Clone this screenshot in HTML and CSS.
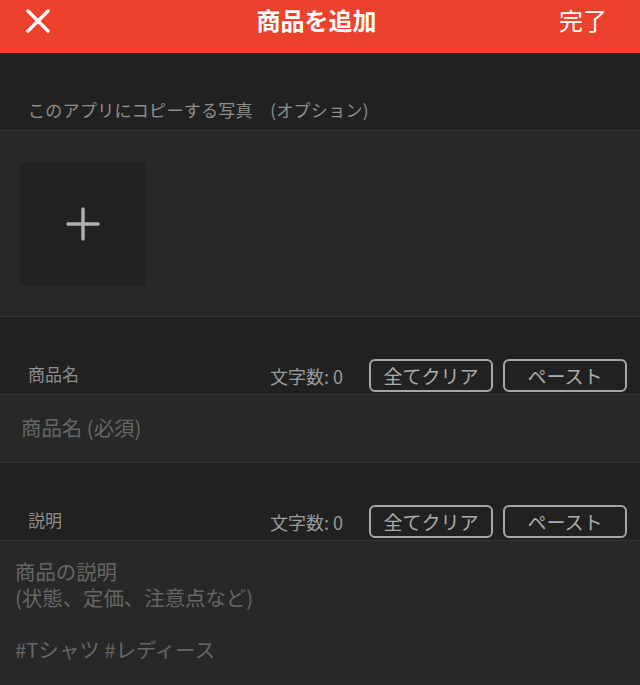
FILE: index.html
```html
<!DOCTYPE html>
<html lang="ja">
<head>
  <meta charset="UTF-8">
  <meta name="viewport" content="width=device-width, initial-scale=1.0">
  <title>商品を追加</title>
  <link rel="stylesheet" href="styles.css">
</head>
<body>
  <header class="navbar">
    <button class="nav-close" aria-label="閉じる">
      <svg width="24" height="24" viewBox="0 0 24 24">
        <path d="M2 2 L22 22 M22 2 L2 22" stroke="#fff" stroke-width="3.4" stroke-linecap="round" fill="none"/>
      </svg>
    </button>
    <h1 class="nav-title">商品を追加</h1>
    <button class="nav-done">完了</button>
  </header>

  <div class="section-head photo-head">
    <span class="section-label">このアプリにコピーする写真　(オプション)</span>
  </div>
  <div class="photo-area">
    <button class="photo-add" aria-label="写真を追加">
      <svg width="34" height="34" viewBox="0 0 34 34">
        <path d="M17 2 L17 32 M2 17 L32 17" stroke="#b0b0b0" stroke-width="3.5" stroke-linecap="round" fill="none"/>
      </svg>
    </button>
  </div>

  <div class="section-head field-head">
    <span class="section-label">商品名</span>
    <span class="char-count">文字数: 0</span>
    <button class="outline-btn">全てクリア</button>
    <button class="outline-btn">ペースト</button>
  </div>
  <div class="field">
    <input class="name-input" type="text" placeholder="商品名 (必須)">
  </div>

  <div class="section-head field-head">
    <span class="section-label">説明</span>
    <span class="char-count">文字数: 0</span>
    <button class="outline-btn">全てクリア</button>
    <button class="outline-btn">ペースト</button>
  </div>
  <div class="field field-grow">
    <textarea class="desc-input" placeholder="商品の説明&#10;(状態、定価、注意点など)&#10;&#10;#Tシャツ #レディース"></textarea>
  </div>
</body>
</html>
```

FILE: styles.css
```css
body {
  font-family: "Noto Sans CJK JP", "Noto Sans", sans-serif;
  background-color: #212121;
  margin: 0;
  padding: 0;
  height: 100vh;
  display: flex;
  flex-direction: column;
  overflow: hidden;
}
button {
  font-family: inherit;
  background: none;
  border: none;
  padding: 0;
  cursor: pointer;
}
.navbar {
  height: 53px;
  flex-shrink: 0;
  background-color: #ec412c;
  display: grid;
  grid-template-columns: 1fr auto 1fr;
  align-items: center;
  padding: 0 33px 0 26px;
  border-bottom: 1px solid #2c2c2c;
}
.nav-close {
  justify-self: start;
  display: flex;
  margin-top: -12px;
}
.nav-title {
  margin: 0;
  font-size: 24px;
  font-weight: bold;
  color: #fff;
  line-height: 32px;
  margin-top: -13px;
}
.nav-done {
  justify-self: end;
  font-size: 24px;
  color: #fff;
  line-height: 32px;
  margin-top: -13px;
}
.section-head {
  height: 77px;
  flex-shrink: 0;
  display: flex;
  align-items: flex-end;
  padding: 0 0 8px 28px;
  box-sizing: border-box;
  border-bottom: 1px solid #363636;
}
.section-label {
  font-size: 17px;
  line-height: 24px;
  color: #8e8e8e;
}
.photo-head .section-label {
  letter-spacing: 0.3px;
}
.photo-area {
  height: 186px;
  flex-shrink: 0;
  background-color: #282828;
  box-sizing: border-box;
  padding: 31px 0 0 20px;
  border-bottom: 1px solid #363636;
}
.photo-add {
  width: 125px;
  height: 124px;
  background-color: #222;
  display: flex;
  align-items: center;
  justify-content: center;
}
.field-head {
  height: 78px;
  align-items: center;
  padding: 41px 13px 1px 28px;
}
.field-head .section-label {
  flex: 1;
  margin-top: -4px;
}
.char-count {
  font-size: 18px;
  color: #9a9a9a;
  line-height: 24px;
  margin-right: 26px;
}
.outline-btn {
  width: 124px;
  height: 33px;
  box-sizing: border-box;
  border: 2px solid #a6a6a6;
  border-radius: 6px;
  font-size: 19px;
  color: #acacac;
  line-height: 27px;
}
.outline-btn + .outline-btn {
  margin-left: 10px;
}
.field {
  height: 68px;
  flex-shrink: 0;
  background-color: #282828;
  border-bottom: 1px solid #363636;
  box-sizing: border-box;
}
.field-grow {
  flex: 1;
  border-bottom: none;
}
.name-input,
.desc-input {
  width: 100%;
  height: 100%;
  box-sizing: border-box;
  background: transparent;
  border: none;
  outline: none;
  font-family: inherit;
  font-size: 20.4px;
  color: #ccc;
}
.name-input {
  padding: 0 0 4px 21px;
}
.desc-input {
  resize: none;
  padding: 17px 0 0 15px;
  line-height: 26px;
}
.name-input::placeholder,
.desc-input::placeholder {
  color: #666;
}
```
